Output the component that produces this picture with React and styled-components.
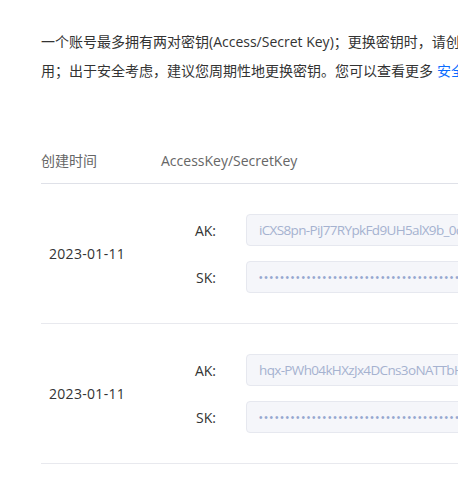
import React from "react";
import styled, { createGlobalStyle } from "styled-components";

const Global = createGlobalStyle`
  html, body { margin: 0; padding: 0; background: #fff; overflow: hidden; }
  body { font-family: "Open Sans", "Noto Sans CJK SC", sans-serif; }
`;

const Page = styled.div`
  width: 1000px;
  padding: 27px 0 0 41px;
  box-sizing: border-box;
`;

const Intro = styled.p`
  margin: 0;
  font-size: 14px;
  line-height: 29px;
  color: #333;
  white-space: nowrap;
`;

const Link = styled.a`
  color: #0a6cff;
  text-decoration: none;
  margin-left: 4px;
`;

const Table = styled.div`
  margin-top: 65px;
  width: 900px;
`;

const HeadRow = styled.div`
  display: flex;
  padding-bottom: 11px;
  border-bottom: 1px solid #dfe1e8;
  font-size: 14px;
  line-height: 22px;
  color: #666;
`;

const HeadCell = styled.div`
  width: ${(p) => p.$w || "auto"};
  flex: ${(p) => (p.$w ? "none" : "1")};
`;

const Row = styled.div`
  display: flex;
  align-items: center;
  padding: 30px 0;
  border-bottom: 1px solid #e8e9ee;
`;

const DateCell = styled.div`
  width: 120px;
  box-sizing: border-box;
  padding-left: 8px;
  font-size: 14px;
  letter-spacing: 0.3px;
  color: #333;
`;

const Keys = styled.div`
  flex: 1;
  display: flex;
  flex-direction: column;
  gap: 15px;
`;

const KeyLine = styled.div`
  display: flex;
  align-items: center;
`;

const Label = styled.div`
  width: 55px;
  text-align: right;
  margin-right: 30px;
  font-size: 14px;
  color: #333;
`;

const Box = styled.div`
  width: 500px;
  height: 32px;
  box-sizing: border-box;
  display: flex;
  align-items: center;
  padding-left: 12px;
  background: #f5f6fa;
  border: 1px solid #e6e8ef;
  border-radius: 4px;
  font-size: 13.5px;
  letter-spacing: -0.65px;
  color: #a5b2d0;
  white-space: nowrap;
  overflow: hidden;
`;

const Dots = styled.span`
  font-family: "Liberation Sans", sans-serif;
  font-size: 10px;
  letter-spacing: 1.8px;
  color: #96a8d0;
`;

const rows = [
  { date: "2023-01-11", ak: "iCXS8pn-PiJ77RYpkFd9UH5alX9b_0cQ1mT7eWzR" },
  { date: "2023-01-11", ak: "hqx-PWh04kHXzJx4DCns3oNATTbHqL2sZk9R" },
];

export default function App() {
  return (
    <>
      <Global />
      <Page>
        <Intro>
          一个账号最多拥有两对密钥(Access/Secret Key)；更换密钥时，请创建新密钥，删除旧密钥前需确保旧密钥不再使
          <br />
          用；出于安全考虑，建议您周期性地更换密钥。您可以查看更多
          <Link href="#">安全最佳实践</Link>
        </Intro>
        <Table>
          <HeadRow>
            <HeadCell $w="120px">创建时间</HeadCell>
            <HeadCell>AccessKey/SecretKey</HeadCell>
          </HeadRow>
          {rows.map((r, i) => (
            <Row key={i}>
              <DateCell>{r.date}</DateCell>
              <Keys>
                <KeyLine>
                  <Label>AK:</Label>
                  <Box>{r.ak}</Box>
                </KeyLine>
                <KeyLine>
                  <Label>SK:</Label>
                  <Box>
                    <Dots>{"•".repeat(60)}</Dots>
                  </Box>
                </KeyLine>
              </Keys>
            </Row>
          ))}
        </Table>
      </Page>
    </>
  );
}
